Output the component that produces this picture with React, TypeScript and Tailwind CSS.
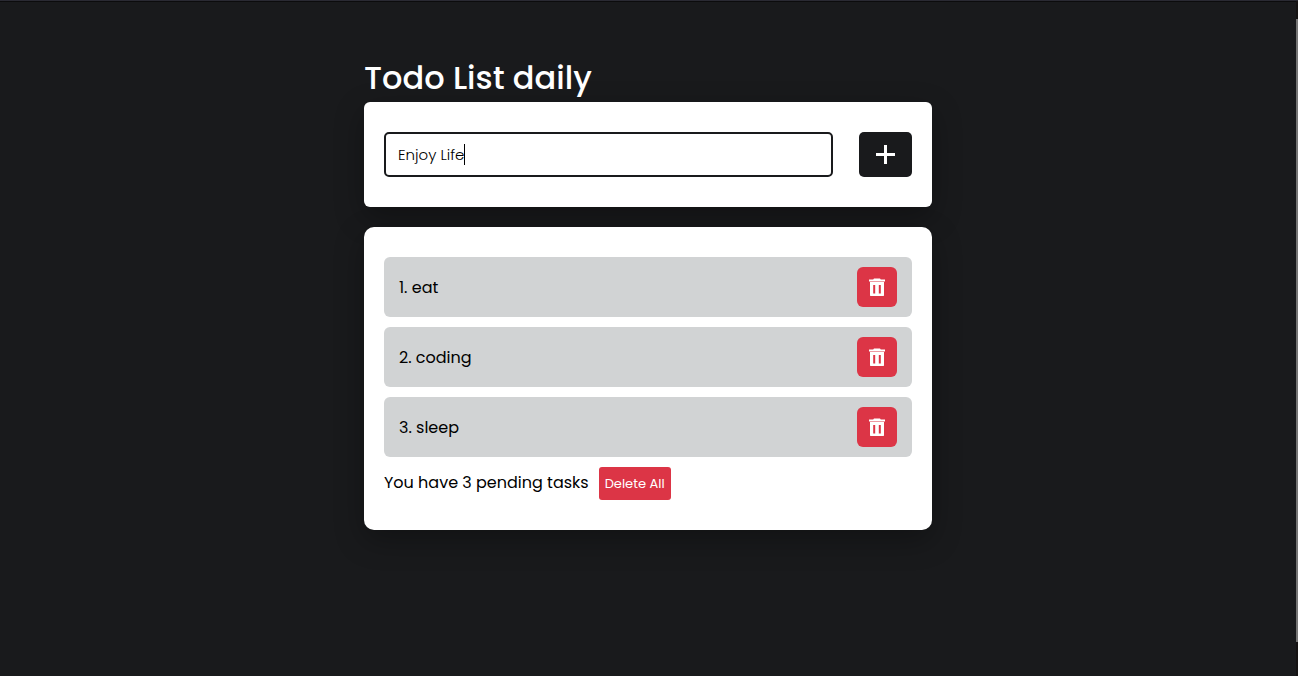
import { useState } from "react";

function TrashIcon() {
  return (
    <svg viewBox="0 0 16 18" className="h-[18px] w-4" fill="currentColor" aria-hidden="true">
      <path d="M5 0.500h6l0.800 1.100H16v2H0v-2h4.200z" />
      <path
        fillRule="evenodd"
        d="M1 3.900h14v13.100a1.300 1.300 0 0 1-1.300 1.300H2.300A1.300 1.300 0 0 1 1 17zM4.200 7v8.500H6.200V7zM9.800 7v8.500h2V7z"
      />
    </svg>
  );
}

export default function App() {
  const [draft, setDraft] = useState("Enjoy Life");
  const [caret, setCaret] = useState(true);
  const [tasks, setTasks] = useState(["eat", "coding", "sleep"]);

  const addTask = () => {
    const name = draft.trim();
    if (!name) return;
    setTasks([...tasks, name]);
    setDraft("");
    setCaret(false);
  };

  return (
    <div className="flex min-h-screen border-t border-[#2a2a33] bg-[#191a1c] font-['Poppins','Inter','Noto_Sans',sans-serif] text-black">
      <main className="flex-1 border-t border-[#0c0c0d] px-4 pt-13">
        <div className="mx-auto w-full max-w-[568px]">
          <h1 className="text-[32px] leading-12 font-medium text-white">Todo List daily</h1>

          <form
            className="flex gap-[26px] rounded-md bg-white px-5 py-[30px] shadow-[0_10px_30px_rgba(0,0,0,0.3)]"
            onSubmit={(e) => {
              e.preventDefault();
              addTask();
            }}
          >
            <div className="relative flex-1">
              <input
                type="text"
                aria-label="New task"
                value={draft}
                onChange={(e) => {
                  setDraft(e.target.value);
                  setCaret(false);
                }}
                className="h-[45px] w-full rounded-[5px] border-2 border-[#191a1c] bg-white px-3 text-[15px] font-light outline-none"
              />
              {caret && <span className="absolute top-3 left-20 h-[21px] w-px bg-black" />}
            </div>
            <button
              type="submit"
              aria-label="Add task"
              className="flex h-[45px] w-[53px] items-center justify-center rounded-[5px] bg-[#191a1c] text-white"
            >
              <svg viewBox="0 0 19 19" className="size-[19px]" fill="currentColor" aria-hidden="true">
                <path d="M8 0h3v8h8v3h-8v8H8v-8H0V8h8z" />
              </svg>
            </button>
          </form>

          <section className="mt-5 rounded-[10px] bg-white px-5 py-[30px] shadow-[0_10px_30px_rgba(0,0,0,0.3)]">
            <ul className="flex flex-col gap-2.5">
              {tasks.map((task, i) => (
                <li
                  key={i}
                  className="flex h-15 items-center justify-between rounded-md bg-[#d1d3d4] px-[15px]"
                >
                  <span className="leading-[25px]">{`${i + 1}. ${task}`}</span>
                  <button
                    type="button"
                    aria-label={`Delete ${task}`}
                    onClick={() => setTasks(tasks.filter((_, j) => j !== i))}
                    className="flex size-10 items-center justify-center rounded-md bg-[#dc3546] text-white"
                  >
                    <TrashIcon />
                  </button>
                </li>
              ))}
            </ul>
            <div className="mt-2.5 flex items-start gap-2.5">
              <p className="leading-[31px]">{`You have ${tasks.length} pending tasks`}</p>
              <button
                type="button"
                onClick={() => setTasks([])}
                className="h-[33px] rounded-[3px] bg-[#dc3546] px-1.5 text-[13px] text-white"
              >
                Delete All
              </button>
            </div>
          </section>
        </div>
      </main>
      <div className="flex w-[2px] flex-col bg-[#151313] pt-[18px] pb-[34px]">
        <div className="flex-1 bg-[#757575]" />
      </div>
    </div>
  );
}
